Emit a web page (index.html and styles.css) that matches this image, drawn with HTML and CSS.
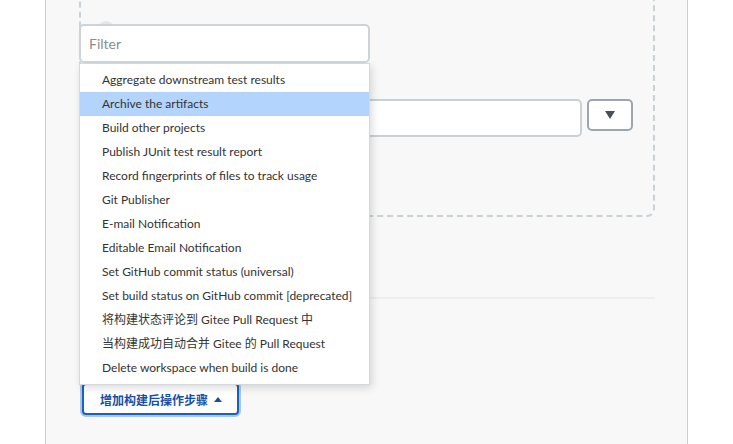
FILE: index.html
```html
<!DOCTYPE html>
<html>
<head>
<meta charset="utf-8">
<link rel="stylesheet" href="styles.css">
</head>
<body>
<div class="panel">
  <div class="dashed">
    <div class="row">
      <div class="field"></div>
      <button class="drop"><span class="tri-down"></span></button>
    </div>
  </div>
  <div class="sep"></div>
  <div class="add-wrap">
    <button class="add"><span class="add-label">增加构建后操作步骤</span><span class="tri-up"></span></button>
  </div>
  <div class="popup">
    <span class="ghost"></span>
    <input class="filter" type="text" placeholder="Filter">
    <ul class="menu">
      <li>Aggregate downstream test results</li>
      <li class="active">Archive the artifacts</li>
      <li>Build other projects</li>
      <li>Publish JUnit test result report</li>
      <li>Record fingerprints of files to track usage</li>
      <li>Git Publisher</li>
      <li>E-mail Notification</li>
      <li>Editable Email Notification</li>
      <li>Set GitHub commit status (universal)</li>
      <li>Set build status on GitHub commit [deprecated]</li>
      <li>将构建状态评论到 Gitee Pull Request 中</li>
      <li>当构建成功自动合并 Gitee 的 Pull Request</li>
      <li>Delete workspace when build is done</li>
    </ul>
  </div>
</div>
</body>
</html>
```

FILE: styles.css
```css
html, body {
  margin: 0;
  padding: 0;
  background: #ffffff;
  overflow: hidden;
}
body {
  font-family: "Segoe UI", Lato, "Noto Sans CJK SC", sans-serif;
  width: 733px;
  height: 444px;
}
.panel {
  position: relative;
  margin-left: 45px;
  width: 641px;
  height: 444px;
  background: #f8f8f8;
  border-left: 1px solid #c8ced2;
  border-right: 1px solid #c8ced2;
  display: flex;
  flex-direction: column;
}
.panel > * {
  flex-shrink: 0;
}
.dashed {
  margin-top: -20px;
  margin-left: 33px;
  width: 572px;
  height: 116px;
  border: 2px dashed #c9d1d5;
  border-radius: 8px;
  padding-top: 117px;
  box-sizing: content-box;
}
.row {
  display: flex;
  align-items: flex-start;
  gap: 5px;
  padding-left: 16px;
}
.field {
  width: 481px;
  height: 34px;
  background: #fff;
  border: 2px solid #c9d1d5;
  border-radius: 5px;
}
.drop {
  width: 46px;
  height: 32px;
  background: #fff;
  border: 2px solid #9ca6ae;
  border-radius: 5px;
  display: flex;
  align-items: center;
  justify-content: center;
  padding: 0;
}
.tri-down {
  width: 0;
  height: 0;
  border-left: 5px solid transparent;
  border-right: 5px solid transparent;
  border-top: 8px solid #4b5058;
}
.sep {
  margin-top: 80px;
  margin-left: 33px;
  width: 576px;
  height: 2px;
  background: #eeeeee;
}
.add-wrap {
  margin-top: 84px;
  margin-left: 36px;
  display: flex;
}
.add {
  height: 32px;
  padding: 0 15px 0 16px;
  background: #fff;
  border: 2px solid #1b5fc0;
  border-radius: 4px;
  box-shadow: 0 0 0 2px #a9c6e6;
  color: #1450a8;
  font-family: "Noto Sans CJK SC", sans-serif;
  font-size: 12px;
  font-weight: 700;
  display: flex;
  align-items: center;
  gap: 6px;
}
.tri-up {
  width: 0;
  height: 0;
  border-left: 4px solid transparent;
  border-right: 4px solid transparent;
  border-bottom: 5px solid #1450a8;
}
.popup {
  position: absolute;
  left: 33px;
  top: 24px;
  width: 291px;
}
.ghost {
  position: absolute;
  left: 18px;
  top: -3px;
  width: 18px;
  height: 18px;
  border-radius: 50%;
  background: #e4e7e9;
}
.filter {
  position: relative;
  display: block;
  box-sizing: border-box;
  width: 291px;
  height: 39px;
  margin: 0;
  padding: 0 8px;
  background: #fff;
  border: 2px solid #ccd4d7;
  border-radius: 5px;
  font-family: "Segoe UI", Lato, "Noto Sans", sans-serif;
  font-size: 14px;
  color: #333;
  outline: none;
}
.filter::placeholder {
  color: #8a8d90;
}
.menu {
  list-style: none;
  margin: 0;
  padding: 4px 0;
  background: #fff;
  border: 1px solid #d6d9dc;
  box-shadow: 2px 3px 8px rgba(0, 0, 0, 0.14);
}
.menu li {
  height: 24px;
  line-height: 24px;
  padding-left: 22px;
  font-size: 12px;
  color: #333;
  white-space: nowrap;
  font-family: Lato, "Noto Sans CJK SC", sans-serif;
}
.menu li.active {
  background: #b3d4fc;
}
```
